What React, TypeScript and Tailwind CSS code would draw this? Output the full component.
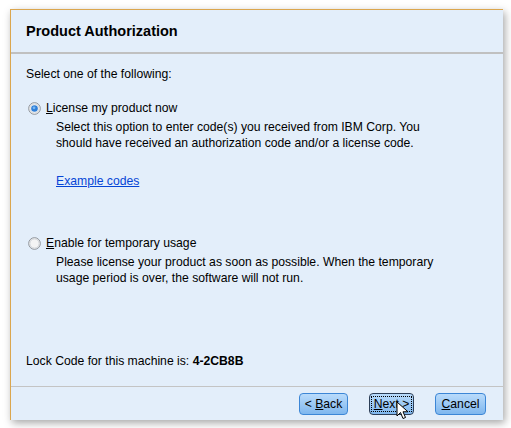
import React from 'react';

const font = { fontFamily: '"Liberation Sans", Arial, sans-serif' };

function Radio({ checked }: { checked: boolean }) {
  return (
    <svg width="13" height="13" viewBox="0 0 13 13" className="shrink-0">
      <circle cx="6.5" cy="6.5" r="5.8" fill="#f4f4f4" stroke="#8a8f96" strokeWidth="1" />
      <circle cx="6.5" cy="6.5" r="4.6" fill="none" stroke="#d2d6db" strokeWidth="1" />
      {checked && <circle cx="6.5" cy="6.5" r="3.3" fill="#2f7fd8" />}
      {checked && <circle cx="6" cy="5.8" r="1.4" fill="#7ab8f2" />}
    </svg>
  );
}

function WizButton({ children, focused, w }: { children: React.ReactNode; focused?: boolean; w: string }) {
  return (
    <div
      className={`${w} h-[22px] rounded-[4px] border flex items-center justify-center text-[12.2px] text-black ${
        focused ? 'border-[#2c3e57]' : 'border-[#3c86d6]'
      } bg-gradient-to-b from-[#b9dbfb] to-[#7fb7ee]`}
    >
      <div className={`flex items-center justify-center ${focused ? 'border border-dotted border-black px-[2px] leading-[14px]' : ''}`}>
        {children}
      </div>
    </div>
  );
}

export default function App() {
  return (
    <div className="w-[511px] h-[428px] bg-white pt-[9px] pl-[10px]" style={font}>
      <div className="w-[493px] h-[411px] bg-[#e3eefa] border-l border-t border-[#dba64e] shadow-[2px_3px_8px_rgba(0,0,0,0.35)] flex flex-col">
        {/* Header */}
        <div className="h-[42px] flex items-center pl-[15px] pt-[1px]">
          <span className="text-[14.5px] font-bold text-black">Product Authorization</span>
        </div>
        <div className="h-[2px] bg-[#c0c0c0]" />

        {/* Body */}
        <div className="flex flex-col pl-[15px] text-[12.2px] leading-[16px] text-black">
          <div className="mt-[12px]">Select one of the following:</div>

          <div className="mt-[18px] flex items-center gap-[5px] pl-[2px]">
            <Radio checked />
            <span><span className="underline">L</span>icense my product now</span>
          </div>
          <div className="mt-[3px] pl-[30px]">
            <div>Select this option to enter code(s) you received from IBM Corp. You</div>
            <div>should have received an authorization code and/or a license code.</div>
          </div>
          <div className="mt-[22px] pl-[30px]">
            <span className="text-[#0645d6] underline">Example codes</span>
          </div>

          <div className="mt-[46px] flex items-center gap-[5px] pl-[2px]">
            <Radio checked={false} />
            <span><span className="underline">E</span>nable for temporary usage</span>
          </div>
          <div className="mt-[3px] pl-[30px]">
            <div>Please license your product as soon as possible. When the temporary</div>
            <div>usage period is over, the software will not run.</div>
          </div>

          <div className="mt-[67px]">
            Lock Code for this machine is: <span className="font-bold">4-2CB8B</span>
          </div>
        </div>

        <div className="mt-[17px] h-px bg-[#c4c4c4]" />

        {/* Footer */}
        <div className="flex items-center justify-end gap-[21px] pr-[17px] mt-[6px]">
          <WizButton w="w-[49px]">
            &lt;&nbsp;<span className="underline">B</span>ack
          </WizButton>
          <div className="relative">
            <WizButton w="w-[45px]" focused>
              <span className="underline">N</span>ext &gt;
            </WizButton>
            <svg width="14" height="20" viewBox="0 0 14 20" className="absolute left-[27px] top-[8px]">
              <path d="M1 1 L1 15 L4.5 11.5 L7 17.5 L9.5 16.5 L7 10.8 L12 10.8 Z" fill="#ffffff" stroke="#000000" strokeWidth="1" strokeLinejoin="round" />
            </svg>
          </div>
          <WizButton w="w-[51px]">
            <span className="underline">C</span>ancel
          </WizButton>
        </div>
      </div>
    </div>
  );
}
